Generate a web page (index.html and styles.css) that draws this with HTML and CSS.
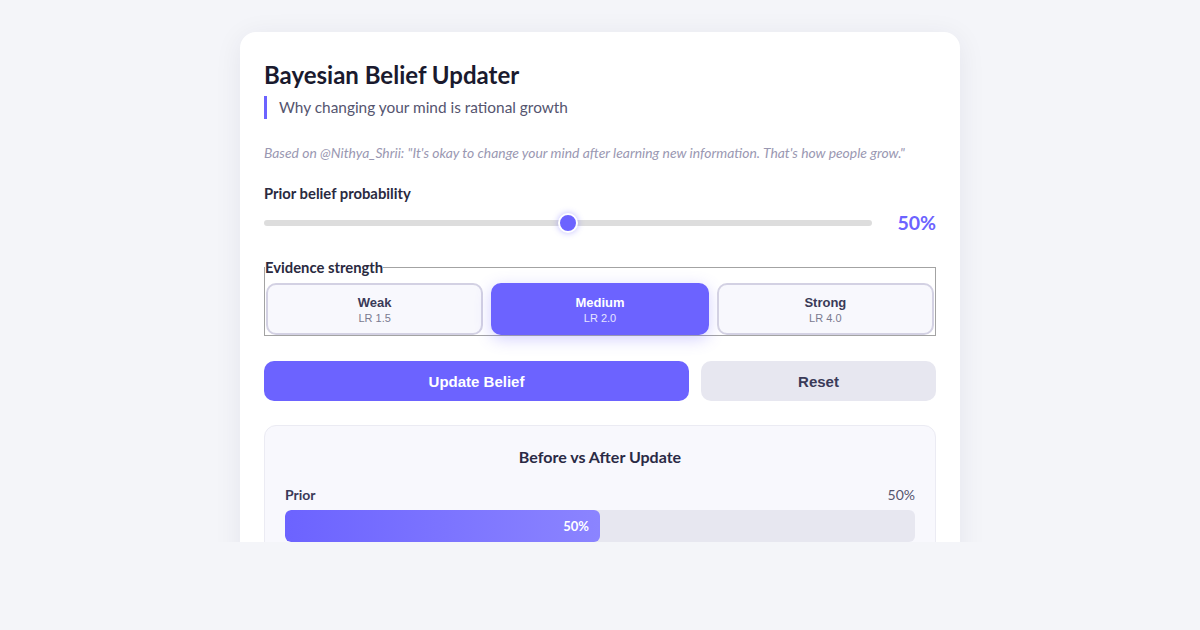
FILE: index.html
```html
<!DOCTYPE html>
<html lang="en">

<head>
    <meta charset="UTF-8">
    <meta name="viewport" content="width=device-width, initial-scale=1.0">
    <title>Bayesian Belief Updater</title>
    <link rel="stylesheet" href="styles.css">
</head>

<body>

    <div class="page">
        <div class="card">
            <h1>Bayesian Belief Updater</h1>
            <p class="subtitle">Why changing your mind is rational growth</p>
            <p class="quote">Based on @Nithya_Shrii: "It's okay to change your mind after learning new information. That's how people grow."</p>

            <div class="field">
                <label for="prior" class="field-label">Prior belief probability</label>
                <div class="slider-row">
                    <input type="range" id="prior" min="1" max="99" value="50">
                    <span class="slider-value" id="priorValue">50%</span>
                </div>
            </div>

            <fieldset class="evidence">
                <legend>Evidence strength</legend>
                <div class="evidence-options">
                    <button class="evidence-btn">
                        <span class="ev-name">Weak</span>
                        <span class="ev-lr">LR 1.5</span>
                    </button>
                    <button class="evidence-btn selected">
                        <span class="ev-name">Medium</span>
                        <span class="ev-lr">LR 2.0</span>
                    </button>
                    <button class="evidence-btn">
                        <span class="ev-name">Strong</span>
                        <span class="ev-lr">LR 4.0</span>
                    </button>
                </div>
            </fieldset>

            <div class="actions">
                <button class="btn-primary">Update Belief</button>
                <button class="btn-secondary">Reset</button>
            </div>

            <div class="results">
                <h3>Before vs After Update</h3>
                <div class="bar-row">
                    <span class="bar-label">Prior</span>
                    <span class="bar-num">50%</span>
                </div>
                <div class="bar-track">
                    <div class="bar-fill" style="width: 50%">50%</div>
                </div>
            </div>
        </div>
    </div>

</body>

</html>
```

FILE: styles.css
```css
body {
    font-family: Lato, "Noto Sans", sans-serif;
    background-color: #f4f5f9;
    margin: 0;
}

.page {
    height: 542px;
    overflow: hidden;
    padding-top: 32px;
    box-sizing: border-box;
}

.card {
    background-color: #fff;
    width: 720px;
    margin: 0 auto;
    padding: 28px 24px 24px;
    box-sizing: border-box;
    border-radius: 16px;
    box-shadow: 0 4px 28px rgba(30, 30, 70, 0.07);
}

h1 {
    margin: 0;
    font-size: 24px;
    line-height: 30px;
    color: #1a1a2e;
}

.subtitle {
    margin: 6px 0 0;
    padding-left: 12px;
    border-left: 3px solid #6c63ff;
    font-size: 15.4px;
    line-height: 23px;
    color: #55556f;
}

.quote {
    margin: 24px 0 0;
    font-size: 13.9px;
    font-style: italic;
    line-height: 19px;
    color: #9a98b2;
}

.field {
    margin-top: 21px;
}

.field-label {
    display: block;
    font-size: 14.8px;
    font-weight: bold;
    line-height: 20px;
    color: #2a2a40;
}

.slider-row {
    display: flex;
    align-items: center;
    gap: 16px;
    margin-top: 7px;
}

.slider-row input[type="range"] {
    -webkit-appearance: none;
    appearance: none;
    flex: 1;
    height: 6px;
    margin: 0;
    border-radius: 3px;
    background: #dddddd;
    outline: none;
}

.slider-row input[type="range"]::-webkit-slider-thumb {
    -webkit-appearance: none;
    width: 20px;
    height: 20px;
    border-radius: 50%;
    background: #6c63ff;
    border: 2px solid #fff;
    box-sizing: border-box;
    box-shadow: 0 0 6px rgba(108, 99, 255, 0.45);
    cursor: pointer;
}

.slider-value {
    min-width: 48px;
    text-align: right;
    font-size: 19.5px;
    font-weight: bold;
    line-height: 26px;
    color: #6c63ff;
}

.evidence {
    margin: 23px 0 0;
    padding: 0;
    border: 1px solid #a3a3a3;
}

.evidence legend {
    padding: 0;
    font-size: 14.8px;
    font-weight: bold;
    line-height: 16px;
    color: #2a2a40;
}

.evidence-options {
    display: grid;
    grid-template-columns: repeat(3, 1fr);
    gap: 8px;
    margin-top: 8px;
    padding: 0 1px;
}

.evidence-btn {
    display: flex;
    flex-direction: column;
    align-items: center;
    justify-content: center;
    gap: 2px;
    height: 52px;
    background-color: #f8f8fd;
    border: 2px solid #d3d1e3;
    border-radius: 10px;
    font-family: "Liberation Sans", Arial, sans-serif;
    cursor: pointer;
}

.ev-name {
    font-size: 13px;
    font-weight: bold;
    color: #3a3a58;
}

.ev-lr {
    font-size: 11px;
    color: #7a7a90;
}

.evidence-btn.selected {
    background-color: #6c63ff;
    border-color: #6c63ff;
    box-shadow: 0 4px 16px rgba(108, 99, 255, 0.3);
}

.evidence-btn.selected .ev-name {
    color: #fff;
}

.evidence-btn.selected .ev-lr {
    color: #e6e4ff;
}

.actions {
    display: flex;
    gap: 12px;
    margin-top: 25px;
}

.actions button {
    height: 40px;
    border: none;
    border-radius: 10px;
    font-family: "Liberation Sans", Arial, sans-serif;
    font-size: 15px;
    font-weight: bold;
    cursor: pointer;
}

.btn-primary {
    flex: 1;
    background-color: #6c63ff;
    color: #fff;
}

.btn-secondary {
    width: 235px;
    background-color: #e7e7f0;
    color: #3a3a58;
}

.results {
    margin-top: 24px;
    padding: 20px;
    background-color: #f8f8fd;
    border: 1px solid #ebebf3;
    border-radius: 12px;
}

.results h3 {
    margin: 0;
    text-align: center;
    font-size: 16px;
    line-height: 22px;
    color: #2a2a45;
}

.bar-row {
    display: flex;
    justify-content: space-between;
    margin-top: 17px;
    font-size: 14px;
    line-height: 20px;
}

.bar-label {
    font-weight: bold;
    color: #3a3a58;
}

.bar-num {
    color: #55556f;
}

.bar-track {
    margin-top: 5px;
    height: 32px;
    background-color: #e7e7f0;
    border-radius: 6px;
    overflow: hidden;
}

.bar-fill {
    height: 100%;
    box-sizing: border-box;
    padding-right: 11px;
    background: linear-gradient(90deg, #6c63ff, #8b84ff);
    border-radius: 6px;
    color: #fff;
    font-size: 13px;
    font-weight: bold;
    line-height: 32px;
    text-align: right;
}
```
